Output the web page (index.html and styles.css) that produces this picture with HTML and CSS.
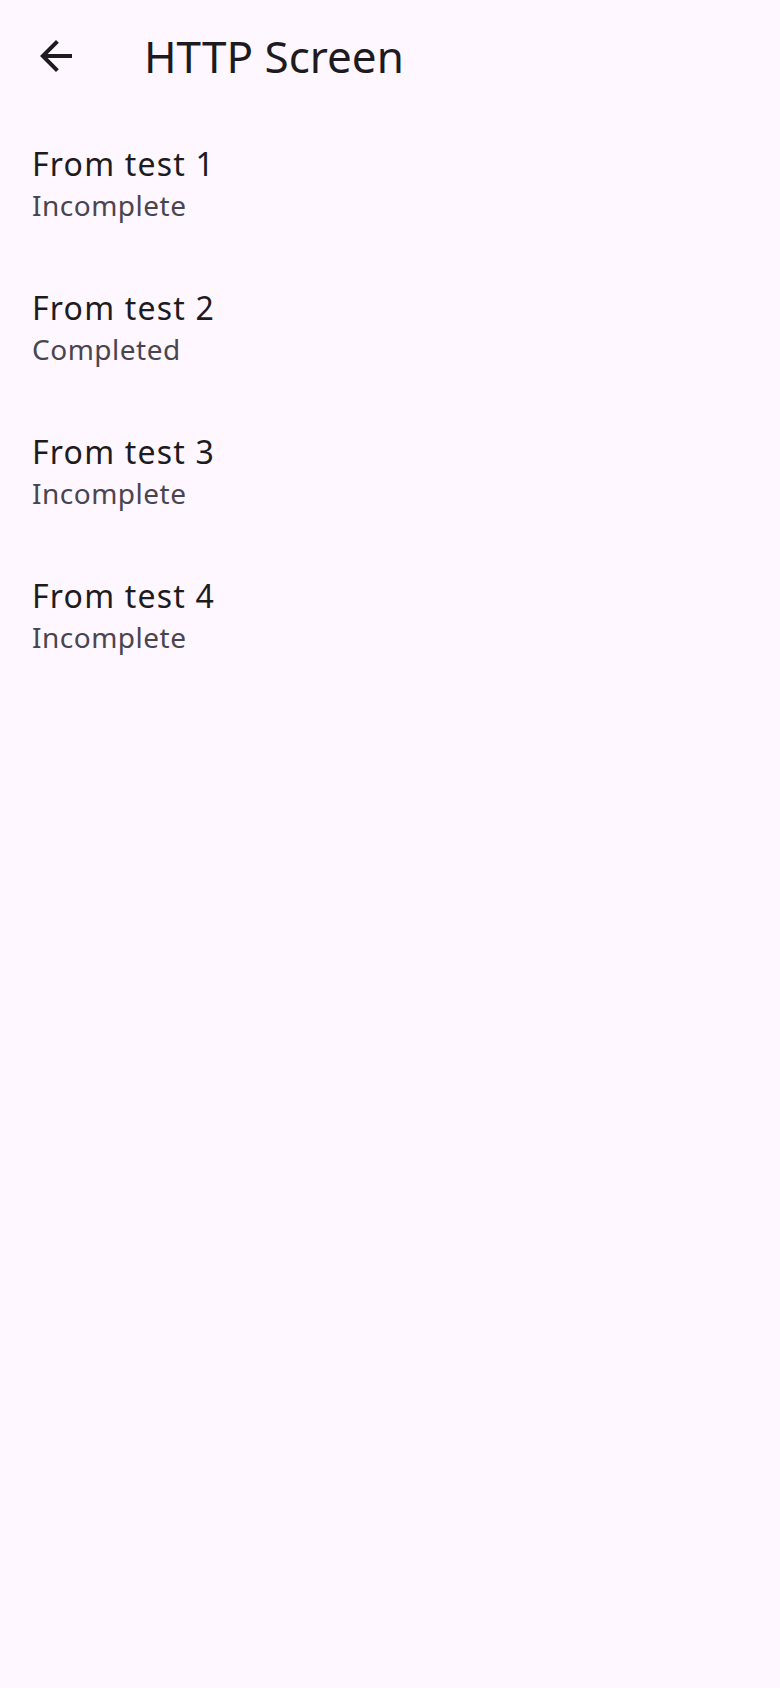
FILE: index.html
```html
<!DOCTYPE html>
<html lang="en">
<head>
<meta charset="utf-8">
<title>HTTP Screen</title>
<link rel="stylesheet" href="styles.css">
</head>
<body>
<div class="screen">
  <header class="topbar">
    <button class="nav-btn" aria-label="Back">
      <svg class="nav-icon" viewBox="0 0 24 24" width="48" height="48"><path d="M20 11H7.83l5.59-5.59L12 4l-8 8 8 8 1.41-1.41L7.83 13H20v-2z"/></svg>
    </button>
    <h1 class="title">HTTP Screen</h1>
  </header>
  <ul class="list">
    <li class="item"><div class="headline">From test 1</div><div class="supporting">Incomplete</div></li>
    <li class="item"><div class="headline">From test 2</div><div class="supporting">Completed</div></li>
    <li class="item"><div class="headline">From test 3</div><div class="supporting">Incomplete</div></li>
    <li class="item"><div class="headline">From test 4</div><div class="supporting">Incomplete</div></li>
  </ul>
</div>
</body>
</html>
```
FILE: styles.css
```css
html, body {
  margin: 0;
  padding: 0;
  background: #fef7ff;
}
body {
  font-family: "Noto Sans", "Open Sans", sans-serif;
  color: #1d1b20;
}
.screen {
  width: 780px;
  min-height: 1688px;
  background: #fef7ff;
}
.topbar {
  height: 112px;
  display: flex;
  align-items: center;
}
.nav-btn {
  margin-left: 8px;
  width: 96px;
  height: 96px;
  border: 0;
  padding: 0;
  background: transparent;
  display: flex;
  align-items: center;
  justify-content: center;
}
.nav-icon {
  fill: #1d1b20;
}
.title {
  margin: 0 0 0 40px;
  font-size: 44px;
  font-weight: 400;
  line-height: 56px;
  color: #1d1b20;
}
.list {
  list-style: none;
  margin: 0;
  padding: 0;
}
.item {
  height: 144px;
  box-sizing: border-box;
  padding: 28px 32px 0;
  display: flex;
  flex-direction: column;
}
.headline {
  font-size: 32px;
  line-height: 48px;
  color: #1d1b20;
  letter-spacing: 1.2px;
}
.supporting {
  font-size: 28px;
  line-height: 34px;
  color: #49454f;
  letter-spacing: 0.5px;
}
```
